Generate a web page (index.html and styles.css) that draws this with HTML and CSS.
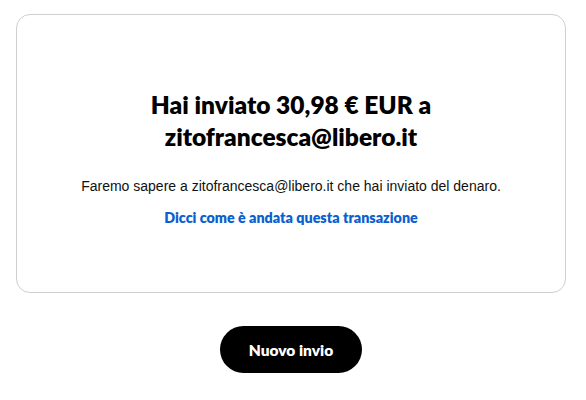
FILE: index.html
```html
<!DOCTYPE html>
<html lang="it">
<head>
<meta charset="utf-8">
<link rel="stylesheet" href="styles.css">
</head>
<body>
<main class="page">
  <section class="card">
    <h1 class="title">Hai inviato 30,98 € EUR a<br>zitofrancesca@libero.it</h1>
    <p class="info">Faremo sapere a zitofrancesca@libero.it che hai inviato del denaro.</p>
    <a class="feedback" href="#">Dicci come è andata questa transazione</a>
  </section>
  <div class="actions">
    <button class="btn" type="button">Nuovo invio</button>
  </div>
</main>
</body>
</html>
```
FILE: styles.css
```css
html, body {
  margin: 0;
  padding: 0;
  background: #ffffff;
}
.page {
  margin: 14px 20px 0 16px;
  display: flex;
  flex-direction: column;
  align-items: stretch;
}
.card {
  border: 1px solid #cfcfcf;
  border-radius: 14px;
  padding: 74px 20px 64px;
  display: flex;
  flex-direction: column;
  align-items: center;
  text-align: center;
}
.title {
  margin: 0;
  font-family: Lato, "Open Sans", sans-serif;
  font-weight: 800;
  font-size: 24.5px;
  line-height: 32px;
  color: #000;
}
.info {
  margin: 23px 0 0;
  font-family: "Liberation Sans", Arial, sans-serif;
  font-size: 14px;
  line-height: 20px;
  color: #111;
}
.feedback {
  margin-top: 12px;
  font-family: Lato, "Open Sans", sans-serif;
  font-weight: 800;
  font-size: 14.3px;
  line-height: 20px;
  color: #0a60cf;
  text-decoration: none;
}
.actions {
  display: flex;
  justify-content: center;
  margin-top: 33px;
}
.btn {
  width: 142px;
  height: 47px;
  border: none;
  border-radius: 24px;
  background: #000;
  color: #fff;
  font-family: Lato, "Open Sans", sans-serif;
  font-weight: 800;
  font-size: 15.5px;
  cursor: pointer;
}
```
